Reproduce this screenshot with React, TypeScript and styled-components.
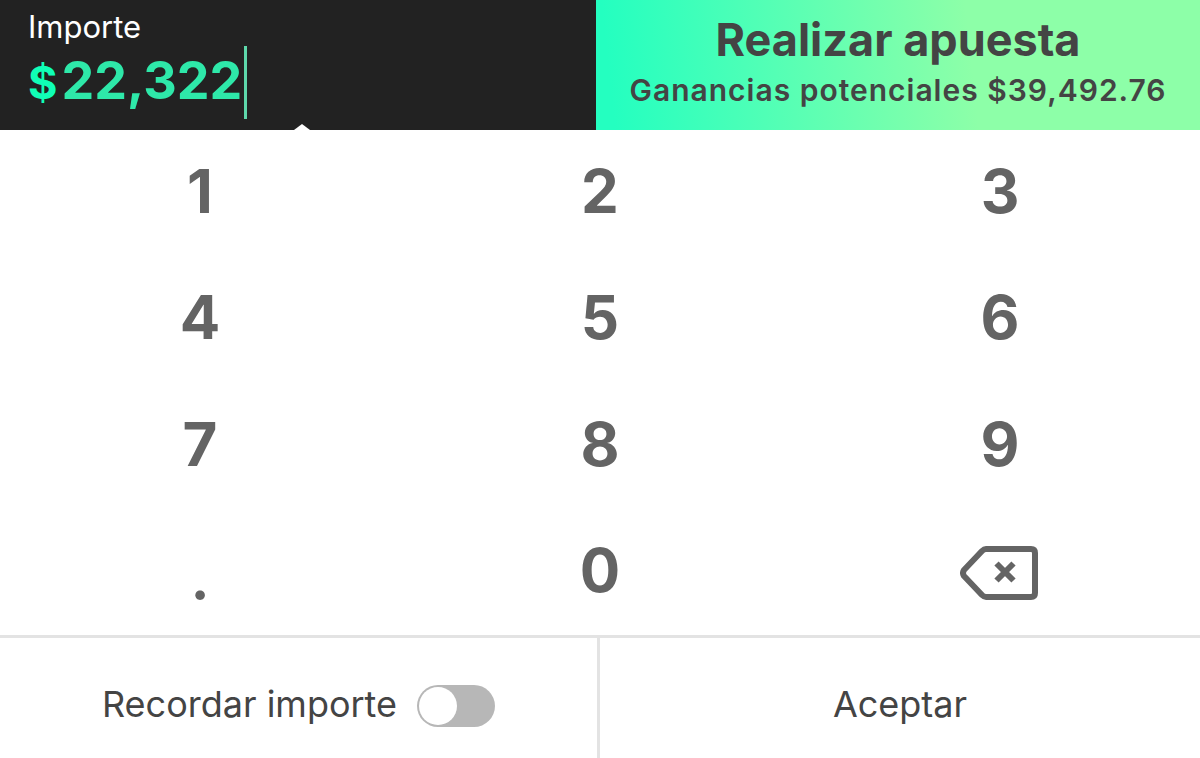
import React, { useState } from "react";
import styled, { createGlobalStyle } from "styled-components";

const GlobalStyle = createGlobalStyle`
  *, *::before, *::after { box-sizing: border-box; }
  body { margin: 0; background: #fff; font-family: Inter, "Liberation Sans", sans-serif; color: #444; }
  button { border: 0; padding: 0; background: none; color: inherit; font: inherit; cursor: pointer; }
`;

const Page = styled.main`
  display: flex;
  flex-direction: column;
  min-height: 100vh;
`;

const Header = styled.header`
  display: grid;
  grid-template-columns: 596fr 604fr;
  min-height: 130px;
`;

const AmountPanel = styled.section`
  position: relative;
  padding: 8px 28px;
  background: #222;
  &::after {
    content: "";
    position: absolute;
    bottom: 0;
    left: calc(50% + 4px);
    transform: translateX(-50%);
    border: 8px solid transparent;
    border-top: 0;
    border-bottom: 6px solid #fff;
  }
`;

const AmountLabel = styled.div`
  color: #fff;
  font-size: 31px;
  line-height: 38px;
`;

const Amount = styled.output`
  display: inline-flex;
  align-items: baseline;
  gap: 4px;
  height: 73px;
  padding-right: 2px;
  border-right: 3px solid #5ed8ab;
  color: #2ee8a9;
  font-size: 52px;
  font-weight: 700;
  line-height: 70px;
`;

const Currency = styled.span`
  color: #10ffb6;
  font-size: 45px;
`;

const BetButton = styled.button`
  && {
    padding-top: 13px;
    background: linear-gradient(84deg, #24ffc0 3%, #8dffa8 62%);
  }
  display: flex;
  flex-direction: column;
  align-items: center;
  white-space: nowrap;
`;

const BetTitle = styled.span`
  font-size: 45px;
  font-weight: 700;
  line-height: 54px;
`;

const BetReturn = styled.span`
  font-size: 30px;
  font-weight: 600;
  line-height: 46px;
  letter-spacing: 1px;
`;

const Keypad = styled.section`
  display: grid;
  flex: 1;
  grid-template-columns: repeat(3, 1fr);
  grid-auto-rows: 1fr;
`;

const Key = styled.button<{ $kind?: "digit" | "point" | "erase" }>`
  && {
    padding-top: ${({ $kind }) => ($kind === "point" ? 14 : $kind === "erase" ? 3 : 0)}px;
    padding-bottom: ${({ $kind }) => ($kind === "digit" ? 4 : 0)}px;
    color: #646464;
    font-size: ${({ $kind }) => ($kind === "point" ? 56 : 60)}px;
    font-weight: 700;
    line-height: 72px;
  }
  display: flex;
  align-items: center;
  justify-content: center;
`;

const Footer = styled.footer`
  display: grid;
  grid-template-columns: 1fr 1fr;
  min-height: 123px;
  border-top: 3px solid #e3e3e3;
  font-size: 36px;
  line-height: 44px;
`;

const Remember = styled.label`
  display: flex;
  align-items: center;
  justify-content: center;
  gap: 20px;
  padding-top: 12px;
  border-right: 3px solid #e3e3e3;
`;

const Switch = styled.input`
  appearance: none;
  width: 78px;
  height: 42px;
  margin: 3px 0 0;
  padding: 2px;
  border-radius: 21px;
  background: #b7b7b7;
  &::before {
    content: "";
    display: block;
    width: 38px;
    height: 38px;
    border-radius: 50%;
    background: #fff;
  }
  &:checked { background: #30e8a9; }
  &:checked::before { margin-left: auto; }
`;

const Accept = styled.button`
  && { padding-top: 12px; }
`;

const keys = ["1", "2", "3", "4", "5", "6", "7", "8", "9", ".", "0"];

function DeleteIcon() {
  return (
    <svg width="80" height="54" viewBox="0 0 80 54" fill="none" stroke="#646464" strokeWidth="6" aria-hidden="true">
      <path d="M26 3H71Q75 3 75 7V47Q75 51 71 51H26Q24 51 22 49L4 30Q2 27 4 24L22 5Q24 3 26 3Z" strokeLinejoin="round" />
      <path d="M36.5 17.5L53.5 34.5M53.5 17.5L36.5 34.5" />
    </svg>
  );
}

export default function App() {
  const [amount, setAmount] = useState("22322");
  const [whole, decimals] = amount.split(".");
  const shown = whole.replace(/\B(?=(\d{3})+$)/g, ",") + (decimals === undefined ? "" : "." + decimals);
  const press = (key: string) =>
    setAmount((value) => (key === "." && value.includes(".") ? value : value + key));
  return (
    <Page>
      <GlobalStyle />
      <Header>
        <AmountPanel>
          <AmountLabel>Importe</AmountLabel>
          <Amount>
            <Currency>$</Currency>
            <span>{shown}</span>
          </Amount>
        </AmountPanel>
        <BetButton>
          <BetTitle>Realizar apuesta</BetTitle>
          <BetReturn>Ganancias potenciales $39,492.76</BetReturn>
        </BetButton>
      </Header>
      <Keypad>
        {keys.map((key) => (
          <Key key={key} $kind={key === "." ? "point" : "digit"} onClick={() => press(key)}>
            {key}
          </Key>
        ))}
        <Key $kind="erase" aria-label="Borrar" onClick={() => setAmount((value) => value.slice(0, -1))}>
          <DeleteIcon />
        </Key>
      </Keypad>
      <Footer>
        <Remember>
          Recordar importe
          <Switch type="checkbox" role="switch" />
        </Remember>
        <Accept>Aceptar</Accept>
      </Footer>
    </Page>
  );
}
